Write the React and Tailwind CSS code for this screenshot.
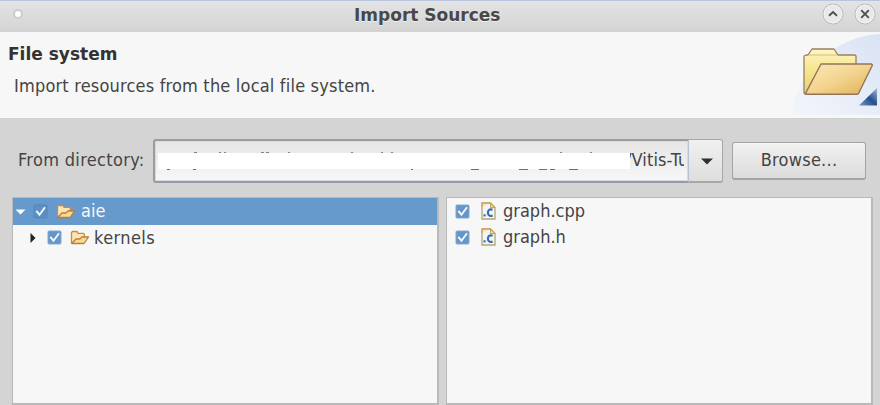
const heading = "font-['DejaVu_Sans',sans-serif] font-bold text-[17px] leading-5 text-[#333333] whitespace-nowrap";
const label = "font-['DejaVu_Sans_Condensed','DejaVu_Sans',sans-serif] [font-stretch:condensed] text-[18px] leading-[26px] text-[#444444] whitespace-nowrap";

function WindowButton({ kind }) {
  return (
    <svg className="block size-[22px]" viewBox="0 0 22 22" fill="none">
      <circle cx="11" cy="11" r="10" fill="#e9e9e9" stroke="#b7b7b7" />
      <circle cx="11" cy="11" r="9" stroke="#f5f5f5" strokeWidth=".8" />
      {kind === "shade" ? (
        <path d="M7 12.700 11 9.100l4 3.600" stroke="#505050" strokeWidth="1.900" />
      ) : (
        <path d="m7.200 7.200 7.600 7.600m0-7.600-7.600 7.600" stroke="#505050" strokeWidth="1.900" />
      )}
    </svg>
  );
}

function Banner() {
  return (
    <svg className="block w-[88px] h-[86px]" viewBox="792 32 88 86">
      <defs>
        <linearGradient id="sky" x1="0" y1="1" x2="1" y2="0">
          <stop offset="0" stopColor="#f3f5fb" />
          <stop offset=".55" stopColor="#e6ecf7" />
          <stop offset="1" stopColor="#d9e3f4" />
        </linearGradient>
        <linearGradient id="back" x1="0" y1="0" x2="0" y2="1">
          <stop offset="0" stopColor="#fff6cc" />
          <stop offset=".35" stopColor="#f8e998" />
          <stop offset="1" stopColor="#ead070" />
        </linearGradient>
        <linearGradient id="front" x1="0" y1="0" x2="1" y2="1">
          <stop offset="0" stopColor="#fbe9b5" />
          <stop offset=".5" stopColor="#f3d490" />
          <stop offset="1" stopColor="#e0b055" />
        </linearGradient>
        <linearGradient id="corner" x1="0" y1="1" x2="1" y2="0">
          <stop offset="0" stopColor="#7898c6" />
          <stop offset=".5" stopColor="#254f8c" />
          <stop offset="1" stopColor="#a3bbdc" />
        </linearGradient>
      </defs>
      <path d="M792 115C794 82 827 37 880 34v81Z" fill="url(#sky)" />
      <path d="m804 56 2-1h2l4-6h22l4 6h17l1 1v37l-1 1h-50l-1-1Z" fill="url(#back)" stroke="#98805f" strokeWidth="1.300" strokeLinejoin="round" />
      <path d="M809 55h28" stroke="#caa94e" strokeWidth=".7" />
      <path d="M821 64h50.500l1 1-14 28.500-1 .8h-51l-1-1Z" fill="url(#front)" stroke="#94745a" strokeWidth="1.400" strokeLinejoin="round" />
      <path d="M859 105.500 877 88v17.500Z" fill="url(#corner)" />
    </svg>
  );
}

function Check({ selected }) {
  return (
    <svg className="block size-[15px] shrink-0" viewBox="0 0 15 15" fill="none">
      <rect x="1" y="1" width="13" height="13" rx="1" fill={selected ? "#5b90c6" : "#6496ca"} stroke={selected ? "#5685b7" : "#82a8d0"} />
      <path d="m3.300 6.800 3.200 3.900 5.500-7.500" stroke="#f4f8fc" strokeWidth="1.900" />
    </svg>
  );
}

function Folder() {
  return (
    <svg className="block w-5 h-[15px] shrink-0" viewBox="0 0 20 15">
      <path d="M1.500 13V2.500l1-1h4.500l1 1.800h5.500l.8.8v3" fill="#fbe6b0" stroke="#cc8a45" strokeWidth="1.300" />
      <path d="M1.700 13.500 6 9h4l2-2h6.500l-4.500 6.500Z" fill="#f9dc95" stroke="#bd7d3e" strokeWidth="1.300" strokeLinejoin="round" />
    </svg>
  );
}

function SourceFile() {
  return (
    <svg className="block w-[15px] h-[18px] shrink-0" viewBox="0 0 15 18">
      <path d="M1 1h8.500L14 5.500V17H1Z" fill="#eff5fb" stroke="#b8a571" strokeWidth="1.300" />
      <path d="M1 5V1h8.500L14 5.500h-4.500V1" fill="#efd58b" fillOpacity=".5" stroke="#c9a04a" />
      <rect x="2.500" y="12.300" width="2.100" height="2.100" fill="#3b6da5" />
      <path d="M11.600 7.800c-2.900-1.200-4.700.2-4.700 2.800s1.800 4.100 4.700 2.900" fill="none" stroke="#386ca4" strokeWidth="2.100" />
    </svg>
  );
}

// Slivers of the path's letters that show above and below the blanked strip.
const ascenders = [[194, 3], [219, 2], [224, 2], [261, 3], [266, 3], [288, 2], [351, 2], [381, 2], [391, 2], [560, 2], [590, 2]];
const descenders = [[167, 3], [193, 3], [411, 2], [471, 8], [519, 9], [539, 8], [550, 5], [569, 9]];

function PathField() {
  return (
    <div className="relative flex w-[536px] items-center justify-end overflow-hidden rounded-l-[3px] border-2 border-r border-[#999da1] border-r-[#b5c3d4] bg-linear-to-b from-[#e6e6e6] to-[#f7f7f7] pr-[4px] shadow-[inset_0_0_0_1px_#d3dce6]">
      <div className="flex w-[59px] overflow-hidden pb-[2px]">
        <span className={label + " ml-[1px] tracking-[0.1px]"}>/Vitis-Tu</span>
      </div>
      <svg className="absolute -left-[2px] -top-[2px] h-[44px] w-[536px]" viewBox="153 139 536 44">
        <path d="M158 153h472v16H158Z" fill="#fff" />
        {ascenders.map(([x, w]) => <rect key={x} x={x} y="152" width={w} height="1" fill="#858585" />)}
        {descenders.map(([x, w]) => <rect key={x} x={x} y="169" width={w} height="1" fill="#707070" />)}
      </svg>
    </div>
  );
}

function FileRow({ name }) {
  return (
    <div className="flex h-[26px] items-center pl-2">
      <Check />
      <span className="ml-[11px] flex"><SourceFile /></span>
      <span className={label + " ml-[7px]"}>{name}</span>
    </div>
  );
}

export default function App() {
  return (
    <div className="flex h-[405px] w-[880px] flex-col overflow-hidden bg-[#d4d4d4]">
      <div className="flex h-8 shrink-0 items-center border-t border-[#b9c5df] bg-linear-to-b from-[#e4e4e4] to-[#d3d3d3] pr-[4px]">
        <div className="ml-[13px] mb-[5px] size-[10px] rounded-full border-2 border-[#cccccc] bg-white" />
        <div className={heading + " ml-[331px] flex-1 pb-[3px] text-[#484848]! [text-shadow:0_1px_0_#efefef]"}>Import Sources</div>
        <div className="flex gap-[10px] pb-[5px]">
          <WindowButton kind="shade" />
          <WindowButton kind="close" />
        </div>
      </div>
      <div className="flex h-[87px] shrink-0 justify-between border-b border-[#d0d0d0] bg-[#f7f7f7]">
        <div className="pt-[12px] pl-[8px]">
          <div className={heading}>File system</div>
          <div className={label + " mt-[9px] ml-[6px] tracking-[0.19px]"}>Import resources from the local file system.</div>
        </div>
        <Banner />
      </div>
      <div className="flex h-[78px] shrink-0 pt-5">
        <div className={label + " w-[153px] pt-[8px] pl-[18px] tracking-[0.33px]"}>From directory:</div>
        <div className="flex h-[44px] w-[570px]">
          <PathField />
          <div className="flex flex-1 items-center justify-center rounded-r-[3px] border border-l-0 border-[#a7a7a7] border-b-2 bg-linear-to-b from-[#f1f1f1] to-[#dedede]">
            <svg className="block h-[7px] w-3 mt-[2px] ml-[2px]" viewBox="0 0 12 7"><path d="M0 .5h12L6 6.500Z" fill="#303030" /></svg>
          </div>
        </div>
        <div className="mt-[3px] ml-[9px] flex h-[38px] w-[134px] items-center justify-center rounded-[3px] border border-b-2 border-[#a3a3a3] bg-linear-to-b from-[#f1f1f1] to-[#dcdcdc] shadow-[inset_0_1px_0_#f7f7f7]">
          <span className={label + " pb-px tracking-[0.25px]"}>Browse...</span>
        </div>
      </div>
      <div className="flex h-[208px] shrink-0 gap-[7px] pl-3">
        <div className="w-[427px] border border-r-2 border-b-2 border-[#b9b9b9] bg-[#f7f7f7]">
          <div className="flex h-[27px] items-center bg-[#6699cc] pl-[2px]">
            <svg className="block h-[6px] w-[11px]" viewBox="0 0 11 6"><path d="M.5.5h10l-5 5Z" fill="#fff" /></svg>
            <span className="ml-[7px] flex"><Check selected /></span>
            <span className="ml-2 flex"><Folder /></span>
            <span className={label + " ml-[5px] pb-px text-[#f7f7f7]!"}>aie</span>
          </div>
          <div className="flex h-[26px] items-center pl-[17px] pb-px">
            <svg className="block h-[10px] w-[6px]" viewBox="0 0 6 10"><path d="M.5 0v10l5-5Z" fill="#222" /></svg>
            <span className="ml-[11px] flex"><Check /></span>
            <span className="ml-2 flex"><Folder /></span>
            <span className={label + " ml-[4px] tracking-[0.4px]"}>kernels</span>
          </div>
        </div>
        <div className="w-[427px] border border-r-2 border-b-2 border-[#b9b9b9] bg-[#f7f7f7]">
          <FileRow name="graph.cpp" />
          <FileRow name="graph.h" />
        </div>
      </div>
    </div>
  );
}
